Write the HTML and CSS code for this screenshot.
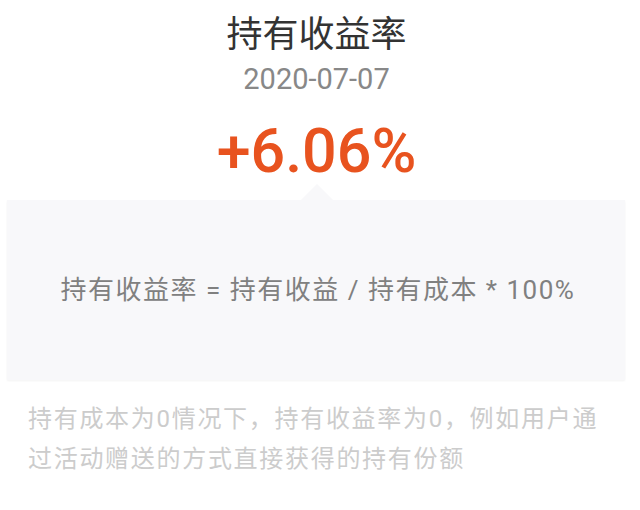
FILE: index.html
```html
<!DOCTYPE html>
<html lang="zh-CN">
<head>
<meta charset="utf-8">
<link rel="stylesheet" href="styles.css">
</head>
<body>
<div class="page">
  <div class="head">
    <div class="title">持有收益率</div>
    <div class="date">2020-07-07</div>
    <div class="rate">+6.06%</div>
  </div>
  <div class="card">
    <div class="formula">持有收益率 = 持有收益 / 持有成本 * 100%</div>
  </div>
  <div class="note">持有成本为0情况下，持有收益率为0，例如用户通过活动赠送的方式直接获得的持有份额</div>
</div>
</body>
</html>
```
FILE: styles.css
```css
html, body {
  margin: 0;
  padding: 0;
  background: #ffffff;
}
body {
  font-family: Roboto, "Noto Sans CJK SC", sans-serif;
  width: 640px;
  height: 510px;
  overflow: hidden;
}
.page {
  display: flex;
  flex-direction: column;
}
.head {
  display: flex;
  flex-direction: column;
  align-items: center;
  padding: 10px 7px 0 0;
}
.title {
  font-size: 36px;
  line-height: 50px;
  color: #333333;
}
.date {
  font-size: 29px;
  line-height: 34px;
  color: #888888;
  margin-top: 2px;
}
.rate {
  font-size: 61px;
  font-weight: 500;
  line-height: 70px;
  color: #e8531f;
  margin-top: 20px;
}
.card {
  position: relative;
  margin: 14px 15px 0 7px;
  height: 180px;
  background: #f8f8fa;
  box-shadow: 0 1px 2px rgba(0, 0, 0, 0.05);
  display: flex;
  align-items: center;
  justify-content: center;
  padding-bottom: 6px;
  box-sizing: border-box;
}
.card::before {
  content: "";
  position: absolute;
  top: -16px;
  left: 294px;
  width: 0;
  height: 0;
  border-left: 16px solid transparent;
  border-right: 16px solid transparent;
  border-bottom: 16px solid #f8f8fa;
}
.formula {
  font-size: 26px;
  letter-spacing: 1.5px;
  color: #808080;
  margin-left: 4px;
}
.note {
  font-size: 24px;
  letter-spacing: 1.7px;
  line-height: 40px;
  color: #cccccc;
  padding: 19px 30px 0 28px;
}
```
